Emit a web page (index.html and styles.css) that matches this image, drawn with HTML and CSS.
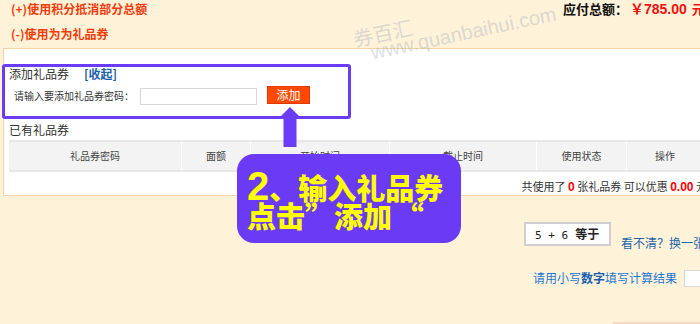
FILE: index.html
```html
<!DOCTYPE html>
<html lang="zh-CN">
<head>
<meta charset="utf-8">
<title>礼品券</title>
<link rel="stylesheet" href="styles.css">
</head>
<body>
<div class="page">
  <div class="top">
    <div class="opts">
      <div class="opt">(+)使用积分抵消部分总额</div>
      <div class="opt">(-)使用为为礼品券</div>
    </div>
    <div class="total">应付总额：<span class="amount">￥785.00</span> <span class="unit">元</span></div>
  </div>

  <div class="panel">
    <div class="add-title">添加礼品券<a class="toggle">[收起]</a></div>
    <div class="add-row">
      <span class="add-label">请输入要添加礼品券密码：</span>
      <input class="code-input" type="text">
      <button class="add-btn" type="button">添加</button>
    </div>
    <div class="have-title">已有礼品券</div>
    <div class="thead">
      <div class="th c1">礼品券密码</div>
      <div class="th c2">面额</div>
      <div class="th c3">开始时间</div>
      <div class="th c4">截止时间</div>
      <div class="th c5">使用状态</div>
      <div class="th c6">操作</div>
    </div>
    <div class="summary">共使用了 <b class="red">0</b> 张礼品券 可以优惠 <b class="red">0.00</b> 元</div>
  </div>

  <div class="captcha-row">
    <div class="captcha"><span class="expr">5 + 6</span><b>等于</b></div>
    <a class="refresh">看不清？换一张</a>
  </div>
  <div class="answer-row">
    <span class="hint">请用小写<b>数字</b>填写计算结果</span>
    <input class="answer" type="text">
  </div>
  <div class="submit-edge"></div>

  <div class="wm wm-cn">券百汇</div>
  <div class="wm wm-url">www.quanbaihui.com</div>

  <div class="mark-box"></div>
  <svg class="mark-arrow" width="26" height="40" viewBox="0 0 26 40">
    <path d="M13 0 L25 12 L19.5 12 L19.5 40 L6.5 40 L6.5 12 L1 12 Z" fill="#6a3cf6"/>
  </svg>
  <div class="callout">
    <div class="cl-line"><span class="big">2</span>、输入礼品券</div>
    <div class="cl-line">点击”添加 <span class="q">“</span></div>
  </div>
</div>
</body>
</html>
```
FILE: styles.css
```css
html, body {
  margin: 0;
  padding: 0;
  overflow: hidden;
  background: #fef2d8;
}
.page {
  position: relative;
  width: 720px;
  height: 324px;
  font-family: "Noto Sans CJK SC", "Liberation Sans", sans-serif;
  color: #333;
}
.top {
  display: flex;
  height: 48px;
  padding-left: 11px;
}
.opts {
  flex: 0 0 552px;
}
.opt {
  font-size: 12px;
  font-weight: bold;
  color: #f03c0a;
  line-height: 17px;
}
.opt + .opt {
  margin-top: 8px;
}
.total {
  font-size: 13px;
  font-weight: bold;
  color: #111;
  line-height: 17px;
  white-space: nowrap;
}
.amount {
  color: #f01010;
  font-size: 14px;
  font-family: "Liberation Sans", "Noto Sans CJK SC", sans-serif;
  margin-left: 2px;
}
.unit {
  color: #f01010;
  margin-left: 2px;
}
.panel {
  margin-left: 3px;
  width: 700px;
  background: #fff;
  border: 1px solid #f3d3a2;
  padding: 16px 5px 0 5px;
}
.add-title {
  font-size: 12px;
  line-height: 18px;
  color: #333;
}
.toggle {
  color: #1a5fa8;
  font-weight: bold;
  margin-left: 15px;
}
.add-row {
  display: flex;
  align-items: center;
  height: 20px;
  margin-top: 2px;
  padding-left: 5px;
}
.add-label {
  font-size: 10px;
  color: #333;
  width: 126px;
}
.code-input {
  box-sizing: border-box;
  width: 117px;
  height: 17px;
  margin: 3px 0 0 0;
  border: 1px solid #d6d6d6;
  padding: 0;
}
.add-btn {
  box-sizing: border-box;
  width: 43px;
  height: 18px;
  margin: 0 0 0 10px;
  padding: 0;
  background: #ff4800;
  border: 1px solid #e03a00;
  color: #fff;
  font-family: "Noto Sans CJK SC", sans-serif;
  font-size: 12px;
  line-height: 16px;
}
.have-title {
  margin-top: 16px;
  font-size: 12px;
  line-height: 18px;
  color: #333;
}
.thead {
  display: flex;
  width: 694px;
  height: 32px;
  margin-top: 1px;
  box-sizing: border-box;
  background: #f3f3f3;
  border-top: 2px solid #e6e6e6;
  border-bottom: 2px solid #e6e6e6;
}
.th {
  box-sizing: border-box;
  font-size: 10px;
  line-height: 28px;
  text-align: center;
  color: #444;
  border-right: 1px solid #fff;
}
.c1 { width: 173px; }
.c2 { width: 69px; }
.c3 { width: 139px; }
.c4 { width: 147px; }
.c5 { width: 90px; }
.c6 { width: 76px; border-right: 0; }
.summary {
  width: 698px;
  margin-top: 5px;
  height: 18px;
  font-size: 11px;
  line-height: 18px;
  text-align: right;
  color: #333;
  white-space: nowrap;
}
.red {
  color: #f00;
  font-family: "Liberation Sans", sans-serif;
  font-size: 12px;
}
.captcha-row {
  display: flex;
  align-items: flex-end;
  padding-left: 524px;
  margin-top: 26px;
}
.captcha {
  box-sizing: border-box;
  width: 87px;
  height: 24px;
  background: #fff;
  border: 2px solid #cfcfcf;
  font-size: 12px;
  line-height: 20px;
  color: #222;
  padding-left: 9px;
  white-space: nowrap;
}
.expr {
  font-family: "DejaVu Sans Mono", monospace;
  font-size: 11px;
  margin-right: 7px;
}
.refresh {
  margin-left: 10px;
  font-size: 12px;
  line-height: 16px;
  color: #1f66ad;
  white-space: nowrap;
  margin-bottom: -5px;
}
.answer-row {
  display: flex;
  align-items: center;
  padding-left: 533px;
  margin-top: 23px;
}
.hint {
  font-size: 12px;
  line-height: 18px;
  color: #1f78d2;
  white-space: nowrap;
}
.hint b {
  color: #1a5fb0;
}
.answer {
  box-sizing: border-box;
  width: 40px;
  height: 17px;
  margin: 0 0 0 7px;
  border: 1px solid #d6d6d6;
  background: #fff;
  padding: 0;
}
.submit-edge {
  margin: 35px 0 0 613px;
  width: 100px;
  height: 4px;
  background: #f8d9c6;
}
.wm {
  position: absolute;
  font-family: "Liberation Sans", "Noto Sans CJK SC", sans-serif;
  font-size: 20px;
  line-height: 24px;
  color: rgba(150, 165, 190, 0.35);
  white-space: nowrap;
  transform: rotate(-12deg);
}
.wm-cn {
  left: 353px;
  top: 22px;
}
.wm-url {
  left: 369px;
  top: 21px;
}
.mark-box {
  position: absolute;
  left: 2px;
  top: 64px;
  width: 343px;
  height: 49px;
  border: 3px solid #6a3cf6;
  border-radius: 3px;
}
.mark-arrow {
  position: absolute;
  left: 277px;
  top: 107px;
}
.callout {
  position: absolute;
  left: 237px;
  top: 154px;
  width: 214px;
  height: 71px;
  padding: 18px 0 0 10px;
  background: #6a3af5;
  border-radius: 17px;
  color: #ffff00;
  font-family: "Noto Sans CJK SC", sans-serif;
  font-weight: 900;
  font-size: 29px;
  white-space: nowrap;
}
.cl-line {
  height: 29px;
  line-height: 29px;
}
.big {
  font-family: "Liberation Sans", sans-serif;
  font-weight: bold;
  font-size: 40px;
  line-height: 29px;
}
.q {
  margin-left: -4px;
}
```
